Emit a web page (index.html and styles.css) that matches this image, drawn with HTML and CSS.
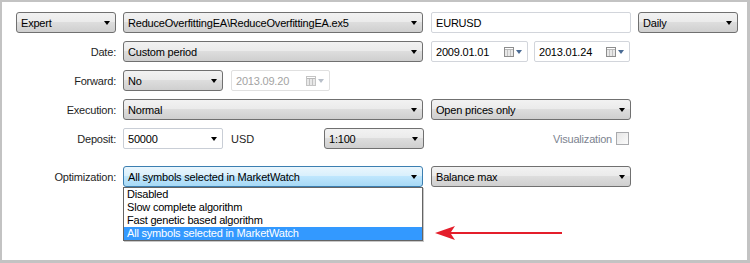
FILE: index.html
```html
<!DOCTYPE html>
<html>
<head>
    <title>Strategy Tester Settings</title>
    <link rel="stylesheet" href="styles.css">
</head>
<body>
    <div class="frame">
        <div class="panel">
            <!-- top row: expert, file, symbol, period -->
            <div class="row">
                <div class="combo w100"><span>Expert</span><i class="arrow"></i></div>
                <div class="combo w300"><span>ReduceOverfittingEA\ReduceOverfittingEA.ex5</span><i class="arrow"></i></div>
                <div class="field w200 gap8"><span>EURUSD</span></div>
                <div class="combo w100 gap7"><span>Daily</span><i class="arrow"></i></div>
            </div>

            <div class="row">
                <label>Date:</label>
                <div class="combo w300"><span>Custom period</span><i class="arrow"></i></div>
                <div class="field date gap8"><span>2009.01.01</span><i class="cal"></i></div>
                <div class="field date date2"><span>2013.01.24</span><i class="cal"></i></div>
            </div>

            <div class="row">
                <label>Forward:</label>
                <div class="combo w100"><span>No</span><i class="arrow"></i></div>
                <div class="field date disabled gap8"><span>2013.09.20</span><i class="cal"></i></div>
            </div>

            <div class="row">
                <label>Execution:</label>
                <div class="combo w300"><span>Normal</span><i class="arrow"></i></div>
                <div class="combo w200 gap8"><span>Open prices only</span><i class="arrow"></i></div>
            </div>

            <div class="row">
                <label>Deposit:</label>
                <div class="combo edit w100"><span>50000</span><i class="arrow"></i></div>
                <span class="unit">USD</span>
                <div class="combo w100"><span>1:100</span><i class="arrow"></i></div>
                <div class="visual">
                    <span>Visualization</span>
                    <i class="check"></i>
                </div>
            </div>

            <div class="row opt">
                <label>Optimization:</label>
                <div class="select-wrap">
                    <div class="combo focus w300"><span>All symbols selected in MarketWatch</span><i class="arrow"></i></div>
                    <ul class="list">
                        <li>Disabled</li>
                        <li>Slow complete algorithm</li>
                        <li>Fast genetic based algorithm</li>
                        <li class="sel">All symbols selected in MarketWatch</li>
                    </ul>
                </div>
                <div class="combo w200 gap8"><span>Balance max</span><i class="arrow"></i></div>
            </div>

            <svg class="pointer" width="130" height="16" viewBox="0 0 130 16">
                <polygon points="0,8 20,1 16,7 127,7 127,9 16,9 20,15" fill="#e41e2b"/>
            </svg>
        </div>
    </div>
</body>
</html>
```

FILE: styles.css
```css
html, body {
    margin: 0;
    padding: 0;
}
body {
    font-family: "Liberation Sans", Arial, sans-serif;
    font-size: 11px;
    color: #000;
    background: #c3c3c3;
}
.frame {
    width: 750px;
    height: 263px;
    padding: 2px 3px 3px 2px;
    box-sizing: border-box;
}
.panel {
    position: relative;
    background: #ffffff;
    height: 258px;
    padding: 10px 0 0 14px;
    box-sizing: border-box;
}
.row {
    display: flex;
    align-items: center;
    height: 21px;
    margin-bottom: 8px;
}
.row.opt {
    margin-top: 17px;
}
label {
    width: 100px;
    text-align: right;
    color: #1e1e1e;
    letter-spacing: -0.2px;
}
.row > :nth-child(2) {
    margin-left: 7px;
}
.w100 { width: 100px; }
.w200 { width: 200px; }
.w300 { width: 300px; }
.gap8 { margin-left: 8px; }
.gap7 { margin-left: 7px; }

.combo, .field {
    position: relative;
    height: 21px;
    box-sizing: border-box;
    display: flex;
    align-items: center;
    padding-left: 4px;
    letter-spacing: -0.2px;
    white-space: nowrap;
}
.combo {
    border: 1px solid #707070;
    border-radius: 3px;
    background: linear-gradient(#f2f2f2 0%, #ebebeb 45%, #dddddd 50%, #cfcfcf 100%);
}
.combo.edit {
    background: #fff;
    border: 1px solid #c9ced6;
    border-radius: 2px;
}
.combo.focus {
    border-color: #3c7fb1;
    background: linear-gradient(#eaf6fd 0%, #d9f0fc 45%, #bee6fd 50%, #a7d9f5 100%);
}
.arrow {
    position: absolute;
    right: 5px;
    top: 8px;
    width: 0;
    height: 0;
    border-left: 3.5px solid transparent;
    border-right: 3.5px solid transparent;
    border-top: 4px solid #000;
}
.field {
    background: #fff;
    border: 1px solid #d2d5db;
    border-radius: 2px;
}
.date {
    width: 97px;
}
.date2 {
    width: 96px;
    margin-left: 6px;
}
.disabled {
    width: 99px;
    color: #a3a3a3;
    border-color: #e0e0e0;
}
.cal {
    position: absolute;
    right: 5px;
    top: 5px;
    width: 18px;
    height: 10px;
    background:
        linear-gradient(to bottom, transparent 2px, #b9b9b9 2px, #b9b9b9 3px, transparent 3px) 0 0 / 10px 10px no-repeat,
        repeating-linear-gradient(90deg, #e8e8e8 0 2px, #c2c2c2 2px 3px) 1px 3px / 8px 6px no-repeat;
}
.cal::before {
    content: "";
    position: absolute;
    left: 0;
    top: 0;
    width: 8px;
    height: 8px;
    border: 1px solid #8d8d8d;
}
.cal::after {
    content: "";
    position: absolute;
    left: 12px;
    top: 3px;
    border-left: 3px solid transparent;
    border-right: 3px solid transparent;
    border-top: 4px solid #4a6b94;
}
.disabled .cal::before {
    border-color: #c4c4c4;
}
.disabled .cal::after {
    border-top-color: #b8bfc9;
}
.unit {
    width: 93px;
    margin-left: 8px;
    color: #1e1e1e;
}
.visual {
    display: flex;
    align-items: center;
    margin-left: auto;
    margin-right: 118px;
    color: #7c8390;
    letter-spacing: -0.2px;
}
.check {
    width: 11px;
    height: 11px;
    margin-left: 4px;
    border: 1px solid #a9aaad;
    background: linear-gradient(135deg, #e6e6e6, #fbfbfb);
}
.select-wrap {
    position: relative;
    margin-left: 7px;
}
.list {
    position: absolute;
    left: 0;
    top: 21px;
    width: 300px;
    margin: 0;
    padding: 0;
    list-style: none;
    background: #fff;
    border: 1px solid #646464;
    box-sizing: border-box;
    box-shadow: 1px 1px 0 #c8c8c8;
    z-index: 2;
}
.list li {
    height: 13px;
    line-height: 13px;
    padding-left: 3px;
    letter-spacing: -0.2px;
}
.list li.sel {
    background: #3399ff;
    color: #fff;
}
.pointer {
    position: absolute;
    left: 433px;
    top: 223px;
}
```
